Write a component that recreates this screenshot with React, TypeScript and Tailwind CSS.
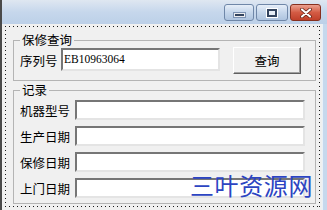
import type { ReactNode } from "react";

const dotted =
  "[background:repeating-linear-gradient(90deg,#1a1a1a_0_1px,transparent_1px_4px)_top_left/100%_1px_no-repeat,repeating-linear-gradient(90deg,#1a1a1a_0_1px,transparent_1px_4px)_bottom_left/100%_1px_no-repeat,repeating-linear-gradient(180deg,#1a1a1a_0_1px,transparent_1px_4px)_top_left/1px_100%_no-repeat,repeating-linear-gradient(180deg,#1a1a1a_0_1px,transparent_1px_4px)_top_right/1px_100%_no-repeat]";

function TextBox({ width, height, value }: { width: string; height: string; value?: string }) {
  return (
    <div
      className={`${width} ${height} flex items-center bg-white border-2 border-t-[#767676] border-l-[#767676] border-r-[#e4e4e4] border-b-[#e4e4e4] pl-[1px] font-['Liberation_Serif',serif] text-[11.5px] text-black`}
    >
      {value}
    </div>
  );
}

function Group({ title, children, className }: { title: string; children: ReactNode; className: string }) {
  return (
    <fieldset className={`m-0 w-[303px] border border-[#b4b4b4] pl-[6px] pr-0 ${className}`}>
      <legend className="px-[2px] text-[12.5px] leading-[14px] text-black">{title}</legend>
      {children}
    </fieldset>
  );
}

function TitleButtons() {
  return (
    <div className="flex gap-[2px] pt-[4px] pr-[6px]">
      <div className="w-[30px] h-[17px] rounded-[3px] border border-[#6f87a8] bg-gradient-to-b from-[#e6eef8] via-[#c5d6eb] to-[#aec4df] flex items-end justify-center pb-[3px]">
        <div className="w-[11px] h-[4px] bg-[#33445e] border border-white/90 shadow-[0_0_0_1px_#7d93b3]" />
      </div>
      <div className="w-[32px] h-[17px] rounded-[3px] border border-[#6f87a8] bg-gradient-to-b from-[#e6eef8] via-[#c5d6eb] to-[#aec4df] flex items-center justify-center">
        <div className="w-[10px] h-[8px] border-2 border-[#33445e] shadow-[0_0_0_1px_white] bg-white/60" />
      </div>
      <div className="w-[31px] h-[17px] rounded-[3px] border border-[#86301f] bg-gradient-to-b from-[#eba08f] via-[#d35b44] to-[#c0402a] flex items-center justify-center">
        <svg width="12" height="10" viewBox="0 0 12 10">
          <path d="M2 1.5 L10 8.5 M10 1.5 L2 8.5" stroke="#5a1b10" strokeWidth="3.6" strokeLinecap="round" />
          <path d="M2 1.5 L10 8.5 M10 1.5 L2 8.5" stroke="white" strokeWidth="2.2" strokeLinecap="round" />
        </svg>
      </div>
    </div>
  );
}

const records = ["机器型号", "生产日期", "保修日期", "上门日期"];

export default function App() {
  return (
    <div className="relative w-[327px] h-[210px] overflow-hidden flex flex-col border-l-2 border-[#4a4a4a] bg-[#c6d8ed] font-['Noto_Sans_CJK_SC',sans-serif]">
      <div className="h-[24px] shrink-0 flex justify-end bg-gradient-to-b from-[#dfe7f1] via-[#c6d7ec] to-[#bcd0e8]">
        <TitleButtons />
      </div>
      <div className="flex-1 flex">
        <div className="w-[320px] bg-[#f0f0f0] pl-[3px] pr-[2px] pt-[2px] pb-[3px] flex">
          <div className={`flex-1 ${dotted} pl-[8px] pt-[7px] flex flex-col`}>
            <Group title="保修查询" className="pt-0 pb-[6px]">
              <div className="flex items-start h-[27px]">
                <span className="w-[41px] mt-[7px] text-[12.5px] leading-[14px] text-black">序列号</span>
                <div className="mt-[1px]">
                  <TextBox width="w-[159px]" height="h-[23px]" value="EB10963064" />
                </div>
                <button
                  type="button"
                  className="ml-[13px] w-[68px] h-[27px] bg-[#f0f0f0] border border-t-white border-l-white border-r-[#5f5f5f] border-b-[#5f5f5f] shadow-[inset_-1px_-1px_0_#a0a0a0] text-[12.5px] leading-[14px] text-black"
                >
                  查询
                </button>
              </div>
            </Group>
            <Group title="记录" className="mt-[2px] pt-[3px] pb-[5px]">
              <div className="flex flex-col gap-[6px]">
                {records.map((label) => (
                  <div key={label} className="flex items-center h-[20px]">
                    <span className="w-[55px] text-[12.5px] leading-[14px] mt-[2px] text-black">{label}</span>
                    <TextBox width="w-[230px]" height="h-[20px]" />
                  </div>
                ))}
              </div>
            </Group>
          </div>
        </div>
        <div className="flex-1 border-l border-[#e9f0f8]" />
      </div>
      <div className="absolute left-[188px] top-[172px] text-[24px] leading-[26px] tracking-[0.6px] text-[#2c44c2]">
        三叶资源网
      </div>
    </div>
  );
}
